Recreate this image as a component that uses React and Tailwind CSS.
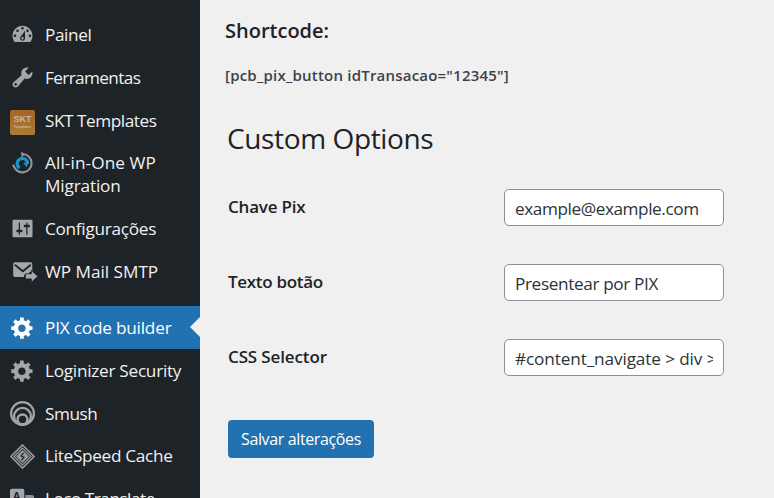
const ICONS = {
  dashboard:
    "M3.76 16h12.48c1.1-1.37 1.76-3.11 1.76-5 0-4.42-3.58-8-8-8s-8 3.58-8 8c0 1.89.66 3.63 1.76 5zM10 4c.55 0 1 .45 1 1s-.45 1-1 1-1-.45-1-1 .45-1 1-1zM6 6c.55 0 1 .45 1 1s-.45 1-1 1-1-.45-1-1 .45-1 1-1zm8 0c.55 0 1 .45 1 1s-.45 1-1 1-1-.45-1-1 .45-1 1-1zm-5.37 5.55L12 7v6c0 1.1-.9 2-2 2s-2-.9-2-2c0-.57.24-1.08.63-1.45zM4 10c.55 0 1 .45 1 1s-.45 1-1 1-1-.45-1-1 .45-1 1-1zm12 0c.55 0 1 .45 1 1s-.45 1-1 1-1-.45-1-1 .45-1 1-1zm-5 3c0-.55-.45-1-1-1s-1 .45-1 1 .45 1 1 1 1-.45 1-1z",
  tools:
    "M16.68 9.77c-1.34 1.34-3.3 1.67-4.95.99l-5.41 6.52c-.99.99-2.59.99-3.58 0s-.99-2.59 0-3.57l6.52-5.42c-.68-1.65-.35-3.61.99-4.95 1.28-1.28 3.12-1.62 4.72-1.06l-2.89 2.89 2.82 2.82 2.86-2.87c.53 1.58.18 3.39-1.08 4.65zM3.81 16.21c.4.39 1.04.39 1.43 0 .4-.4.4-1.04 0-1.43-.39-.4-1.03-.4-1.43 0-.39.39-.39 1.03 0 1.43z",
  settings:
    "M18 16V4c0-.55-.45-1-1-1H3c-.55 0-1 .45-1 1v12c0 .55.45 1 1 1h14c.55 0 1-.45 1-1zM8 11h1c.55 0 1 .45 1 1s-.45 1-1 1H8v1.5c0 .28-.22.5-.5.5s-.5-.22-.5-.5V13H6c-.55 0-1-.45-1-1s.45-1 1-1h1V5.5c0-.28.22-.5.5-.5s.5.22.5.5V11zm5-2h-1c-.55 0-1-.45-1-1s.45-1 1-1h1V5.5c0-.28.22-.5.5-.5s.5.22.5.5V7h1c.55 0 1 .45 1 1s-.45 1-1 1h-1v5.5c0 .28-.22.5-.5.5s-.5-.22-.5-.5V9z",
  gear:
    "M18 12h-2.18c-.17.7-.44 1.35-.81 1.93l1.54 1.54-2.1 2.1-1.54-1.54c-.58.36-1.23.63-1.91.79V19H8v-2.18c-.68-.16-1.33-.43-1.91-.79l-1.54 1.54-2.12-2.12 1.54-1.54c-.36-.58-.63-1.23-.79-1.91H1V9.03h2.17c.16-.7.44-1.35.8-1.94L2.43 5.55l2.1-2.1 1.54 1.54c.58-.37 1.24-.64 1.93-.81V2h3v2.18c.68.16 1.33.43 1.91.79l1.54-1.54 2.12 2.12-1.54 1.54c.36.59.64 1.24.8 1.94H18V12zm-8.5 1.5c1.66 0 3-1.34 3-3s-1.34-3-3-3-3 1.34-3 3 1.34 3 3 3z",
};

function Dashicon({ name }) {
  return (
    <svg viewBox="0 0 20 20" className="size-[25px]" fill="currentColor">
      <path d={ICONS[name]} />
    </svg>
  );
}

function SktIcon() {
  return (
    <div className="mt-0.5 flex size-[25px] flex-col items-center rounded-xs bg-linear-to-b from-[#a8641f] to-[#a97d35] pt-[4px] font-['Liberation_Sans',sans-serif] text-[#c9b8a4]">
      <span className="text-[9px] leading-[11px] font-bold">SKT</span>
      <span className="text-[3.6px] leading-[5px] font-bold">Templates</span>
    </div>
  );
}

function MigrationIcon() {
  return (
    <svg viewBox="0 0 25 25" className="size-[25px]" fill="none">
      <path d="M12.3 3A9.2 9.2 0 1 1 3.3 13.5" stroke="#91959a" strokeWidth="2.1" />
      <path d="M11 .6l4.400 2.700-4 3z" fill="#91959a" />
      <path d="M9.600 17A5.200 5.200 0 1 1 17.600 12.600" stroke="#1b94cc" strokeWidth="3.200" />
      <path d="M13.200 11.700l5.400-.5-2 5z" fill="#1b94cc" />
    </svg>
  );
}

function MailIcon() {
  return (
    <svg viewBox="0 0 28 25" className="ml-[5px] h-[25px] w-7 shrink-0">
      <path
        d="M4 3.2h15.500q1.800 0 1.800 1.800v8h-3v3H13v2H4q-1.800 0-1.800-1.800V5q0-1.800 1.800-1.800z"
        fill="#a4a8ac"
      />
      <path d="M3.800 5.800l8 6.400 8-6.400" fill="none" stroke="#1d2327" strokeWidth="1.900" />
      <path d="M14.300 14.800h6v-3.600l6.600 6.200-6.600 6v-3.500h-6z" fill="#a4a8ac" stroke="#1d2327" strokeWidth=".9" />
    </svg>
  );
}

function SmushIcon() {
  return (
    <svg viewBox="0 0 25 25" className="size-[25px]" fill="none" stroke="#a2a6aa" strokeWidth="2.200">
      <circle cx="12.500" cy="12.500" r="11.400" />
      <circle cx="12.500" cy="15.300" r="8.400" />
      <circle cx="12.500" cy="18.400" r="4.900" strokeWidth="2.400" />
    </svg>
  );
}

function LiteSpeedIcon() {
  return (
    <svg viewBox="0 0 25 25" className="size-[25px]" fill="none" stroke="#979ba0">
      <path d="M12.500 1L24 12.500 12.500 24 1 12.500z" strokeWidth="1.700" />
      <path d="M12.500 4.100L20.900 12.500 12.500 20.900 4.100 12.500z" strokeWidth="1.300" />
      <path d="M12.500 6l6.500 6.500-6.500 6.500-6.500-6.500z" fill="#979ba0" stroke="none" />
      <path d="M13.600 8.800l-2.600 3.200 3 1.200-2.600 3.200" stroke="#1d2327" strokeWidth="1.200" />
    </svg>
  );
}

function LocoIcon() {
  return (
    <svg viewBox="0 0 25 25" className="size-[25px]">
      <path d="M2 2.700h10.500q1.800 0 1.800 1.800V20H0V4.500q0-1.800 2-1.800z" fill="#a2a6aa" />
      <path d="M15.300 9H22q2 0 2 2v9h-8.700z" fill="#8d9196" />
      <text x="3" y="13.500" fontSize="10.500" fontWeight="700" fill="#1d2327">A</text>
    </svg>
  );
}

function MenuItem({ icon, label, second, active, box = "h-[43px]", pad = "pt-[10px]", track }) {
  return (
    <li className={`flex ${box} ${active ? "bg-[#2271b1] text-white" : "text-[#f0f0f1]"}`}>
      <span className={`flex w-[45px] shrink-0 justify-center pt-[8.5px] ${active ? "text-white" : "text-[#a1a6ab]"}`}>
        <span className="flex h-[25px]">{icon}</span>
      </span>
      <span className={`flex flex-col text-[17.2px] leading-[23px] whitespace-nowrap ${pad} ${track}`}>
        <span>{label}</span>
        {second && <span className="tracking-[-0.15px]">{second}</span>}
      </span>
      {active && (
        <svg viewBox="0 0 10 20" className="mt-[11px] ml-auto h-5 w-2.5">
          <path d="M10 0v20L0 10z" fill="#f0f0f1" />
        </svg>
      )}
    </li>
  );
}

function Field({ label, value, track, valueTrack }) {
  return (
    <div className="flex h-[75px] items-start">
      <label className={`w-[276px] pt-[6px] text-[17px] leading-[23px] font-semibold text-[#1d2327] ${track}`}>{label}</label>
      <div className="flex h-[37px] w-[220px] rounded-[5px] border border-[#8c8f94] bg-white px-[10px]">
        <div className={`overflow-hidden pt-[7px] text-[17.2px] leading-[24px] whitespace-nowrap text-[#2c3338] ${valueTrack}`}>
          {value}
        </div>
      </div>
    </div>
  );
}

export default function App() {
  return (
    <div className="flex h-[498px] w-[774px] overflow-hidden bg-[#f0f0f1] font-['Open_Sans','Noto_Sans',sans-serif]">
      <nav className="h-full w-[200px] shrink-0 overflow-hidden bg-[#1d2327] pt-[13px]">
        <ul>
          <MenuItem icon={<Dashicon name="dashboard" />} label="Painel" track="tracking-[-0.4px]" />
          <MenuItem icon={<Dashicon name="tools" />} label="Ferramentas" track="tracking-[-0.62px]" />
          <MenuItem icon={<SktIcon />} label="SKT Templates" track="tracking-[-0.45px]" />
          <MenuItem
            icon={<MigrationIcon />}
            label="All-in-One WP"
            second="Migration"
            box="h-[65px]"
            pad="pt-[9px]"
            track="tracking-[0.1px]"
          />
          <MenuItem icon={<Dashicon name="settings" />} label="Configurações" track="tracking-[-0.28px]" />
          <MenuItem icon={<MailIcon />} label="WP Mail SMTP" track="tracking-[-0.03px]" />
        </ul>
        <ul className="pt-[13px]">
          <MenuItem active icon={<Dashicon name="gear" />} label="PIX code builder" track="tracking-[-0.2px]" />
          <MenuItem icon={<Dashicon name="gear" />} label="Loginizer Security" track="tracking-[-0.27px]" />
          <MenuItem icon={<SmushIcon />} label="Smush" track="tracking-[-0.45px]" />
          <MenuItem icon={<LiteSpeedIcon />} label="LiteSpeed Cache" box="h-[42px]" pad="pt-[9px]" track="tracking-[-0.3px]" />
          <MenuItem icon={<LocoIcon />} label="Loco Translate" track="tracking-[-0.5px]" />
        </ul>
      </nav>
      <main className="flex-1 pt-[17px] pl-[25px]">
        <h3 className="text-[20px] leading-[28px] font-semibold tracking-[0px] text-[#1d2327]">Shortcode:</h3>
        <p className="mt-[19px] text-[15px] leading-[22px] font-semibold tracking-[0.21px] text-[#3c434a]">
          [pcb_pix_button idTransacao="12345"]
        </p>
        <div className="pl-[3px]">
          <h1 className="mt-[32px] -ml-px text-[28px] leading-[40px] tracking-[-0.37px] text-[#1d2327]">Custom Options</h1>
          <div className="mt-[31px]">
            <Field label="Chave Pix" value="example@example.com" track="tracking-[-0.2px]" valueTrack="tracking-[-0.42px]" />
            <Field label="Texto botão" value="Presentear por PIX" track="tracking-[-0.3px]" valueTrack="tracking-[-0.37px]" />
            <Field label="CSS Selector" value="#content_navigate > div > div" track="tracking-[-0.13px]" valueTrack="tracking-[-0.12px]" />
          </div>
          <button className="mt-[6px] flex h-[38px] w-[146px] items-center justify-center rounded-[4px] bg-[#2271b1] text-[16px] tracking-[-0.37px] text-white">
            Salvar alterações
          </button>
        </div>
      </main>
    </div>
  );
}
